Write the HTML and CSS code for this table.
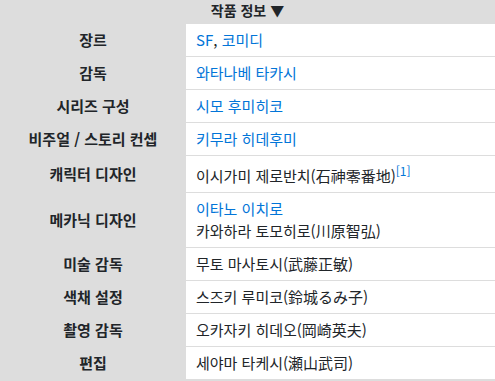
FILE: index.html
```html
<!DOCTYPE html>
<html lang="ko">
<head>
<meta charset="utf-8">
<link rel="stylesheet" href="styles.css">
</head>
<body>
<div class="info">
  <div class="head">작품 정보 ▼</div>
  <div class="grid">
    <div class="lbl">장르</div>
    <div class="val"><a href="#">SF</a>, <a href="#">코미디</a></div>
    <div class="lbl">감독</div>
    <div class="val"><a href="#">와타나베 타카시</a></div>
    <div class="lbl">시리즈 구성</div>
    <div class="val"><a href="#">시모 후미히코</a></div>
    <div class="lbl">비주얼 / 스토리 컨셉</div>
    <div class="val"><a href="#">키무라 히데후미</a></div>
    <div class="lbl">캐릭터 디자인</div>
    <div class="val">이시가미 제로반치(石神零番地)<sup><a href="#">[1]</a></sup></div>
    <div class="lbl">메카닉 디자인</div>
    <div class="val"><a href="#">이타노 이치로</a><br>카와하라 토모히로(川原智弘)</div>
    <div class="lbl">미술 감독</div>
    <div class="val">무토 마사토시(武藤正敏)</div>
    <div class="lbl">색채 설정</div>
    <div class="val">스즈키 루미코(鈴城るみ子)</div>
    <div class="lbl">촬영 감독</div>
    <div class="val">오카자키 히데오(岡崎英夫)</div>
    <div class="lbl">편집</div>
    <div class="val">세야마 타케시(瀬山武司)</div>
  </div>
</div>
</body>
</html>
```
FILE: styles.css
```css
html, body {
  margin: 0;
  padding: 0;
  background: #dddddd;
}
body {
  font-family: "Noto Sans CJK KR", "Noto Sans", sans-serif;
  font-size: 15px;
  line-height: 22px;
  color: #212529;
}
.head {
  text-align: center;
  font-weight: bold;
  font-size: 14px;
  height: 24px;
  line-height: 20px;
  color: #212529;
}
.grid {
  display: grid;
  grid-template-columns: 186px 1fr;
}
.lbl {
  display: flex;
  align-items: center;
  justify-content: center;
  font-weight: bold;
  background: #dddddd;
  border-bottom: 1px solid #dddddd;
}
.val {
  background: #ffffff;
  padding: 5px 10px;
  border-bottom: 1px solid #dddddd;
}
a {
  color: #0275d8;
  text-decoration: none;
}
sup {
  font-size: 12px;
  line-height: 20px;
  vertical-align: 6px;
}
```
